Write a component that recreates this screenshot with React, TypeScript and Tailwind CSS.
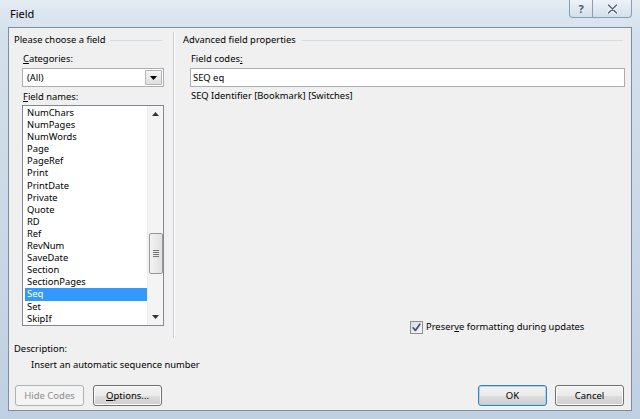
import React from "react";

const items = [
  "NumChars","NumPages","NumWords","Page","PageRef","Print","PrintDate","Private","Quote","RD","Ref","RevNum","SaveDate","Section","SectionPages","Seq","Set","SkipIf",
];

function Btn({ children, disabled, def, w }: { children: React.ReactNode; disabled?: boolean; def?: boolean; w: string }) {
  const base = "h-[21px] rounded-[3px] border flex items-center justify-center text-[9.5px] leading-none " + w;
  if (disabled)
    return <div className={base + " border-[#adb2b5] bg-[#f4f4f4] text-[#8d8d8d]"}>{children}</div>;
  return (
    <div
      className={
        base +
        (def
          ? " border-[#3c7fb1] shadow-[inset_0_0_0_1px_#a5d6f5]"
          : " border-[#707070] shadow-[inset_0_0_0_1px_#fcfcfc]") +
        " bg-[linear-gradient(#f2f2f2_0%,#ebebeb_50%,#dddddd_50%,#cfcfcf_100%)] text-black"
      }
    >
      {children}
    </div>
  );
}

export default function App() {
  return (
    <div
      className="w-[640px] h-[419px] overflow-hidden flex flex-col bg-[linear-gradient(180deg,#e3ebf3_0%,#d4e0ec_8%,#bfd0e2_100%)] px-[8px] pb-[8px]"
      style={{ fontFamily: '"Noto Sans", "Open Sans", sans-serif' }}
    >
      {/* title bar */}
      <div className="h-[27px] flex items-start shrink-0">
        <div className="pl-[2px] pt-[6px] text-[11px] leading-[16px] text-black">Field</div>
        <div className="ml-auto flex h-[18px] mr-[0px]">
          <div className="w-[24px] h-[18px] border border-[#8d9db0] border-t-0 rounded-bl-[4px] bg-[linear-gradient(#eef3f8,#d3dfea)] flex items-center justify-center text-[11px] font-bold text-[#4b5a6b] leading-none">
            ?
          </div>
          <div className="w-[39px] h-[18px] border border-[#8d9db0] border-t-0 border-l-0 rounded-br-[4px] bg-[linear-gradient(#eef3f8,#d3dfea)] flex items-center justify-center">
            <svg width="11" height="10" viewBox="0 0 11 10">
              <path d="M1.5 1 L9.5 9 M9.5 1 L1.5 9" stroke="#ffffff" strokeWidth="3.2" strokeLinecap="round" />
              <path d="M1.5 1 L9.5 9 M9.5 1 L1.5 9" stroke="#56657a" strokeWidth="1.6" strokeLinecap="round" />
            </svg>
          </div>
        </div>
      </div>

      {/* client */}
      <div className="flex-1 bg-[#f0f0f0] border border-[#7f8fa3] flex flex-col text-[9.4px] text-black leading-[16px]">
        {/* columns */}
        <div className="flex h-[306px] mt-[4px]">
          {/* left */}
          <div className="w-[164px] pl-[5px] pr-[10px] flex flex-col">
            <div className="flex items-center h-[16px]">
              <span>Please choose a field</span>
              <div className="flex-1 h-px bg-[#d5dfe5] ml-[4px] mt-[1px]" />
            </div>
            <div className="mt-[3px] ml-[9px] h-[16px]">
              <span className="underline">C</span>ategories:
            </div>
            <div className="mt-[1px] ml-[8px] w-[142px] h-[19px] border border-[#abadb3] bg-white flex items-stretch">
              <div className="flex-1 pl-[4px] flex items-center">(All)</div>
              <div className="w-[17px] border border-[#b5b5b5] m-px rounded-[1px] bg-[linear-gradient(#f4f4f4,#dedede)] flex items-center justify-center">
                <svg width="7" height="4" viewBox="0 0 7 4"><path d="M0 0H7L3.5 4Z" fill="#000" /></svg>
              </div>
            </div>
            <div className="mt-[2px] ml-[9px] h-[16px]">
              <span className="underline">F</span>ield names:
            </div>
            <div className="ml-[8px] w-[142px] h-[221px] border border-[#828790] bg-white flex overflow-hidden">
              <div className="flex-1 pt-[1px] pl-[2px] overflow-hidden">
                {items.map((it) => (
                  <div
                    key={it}
                    className={
                      "h-[12.1px] leading-[12.1px] pl-[2px] whitespace-nowrap " +
                      (it === "Seq" ? "bg-[#3399ff] text-white" : "")
                    }
                  >
                    {it}
                  </div>
                ))}
              </div>
              <div className="w-[16px] bg-[#f4f4f4] border-l border-[#ececec] flex flex-col items-center">
                <div className="h-[16px] flex items-center justify-center">
                  <svg width="7" height="4" viewBox="0 0 7 4"><path d="M0 4H7L3.5 0Z" fill="#333" /></svg>
                </div>
                <div className="mt-[111px] w-[14px] h-[41px] rounded-[2px] border border-[#979797] bg-[linear-gradient(90deg,#f3f3f3,#e0e0e0)] flex flex-col items-center justify-center gap-[1px]">
                  <div className="w-[6px] h-px bg-[#777]" />
                  <div className="w-[6px] h-px bg-[#777]" />
                  <div className="w-[6px] h-px bg-[#777]" />
                  <div className="w-[6px] h-px bg-[#777]" />
                </div>
                <div className="mt-auto h-[16px] flex items-center justify-center">
                  <svg width="7" height="4" viewBox="0 0 7 4"><path d="M0 0H7L3.5 4Z" fill="#333" /></svg>
                </div>
              </div>
            </div>
          </div>

          {/* right */}
          <div className="flex-1 border-l border-[#c9cdd2] shadow-[inset_1px_0_0_#ffffff] pl-[9px] pr-[6px] flex flex-col">
            <div className="flex items-center h-[16px]">
              <span>Advanced field properties</span>
              <div className="flex-1 h-px bg-[#d5dfe5] ml-[5px] mr-[2px] mt-[1px]" />
            </div>
            <div className="mt-[3px] ml-[8px] h-[16px]">
              Field codes<span className="underline">:</span>
            </div>
            <div className="mt-[1px] ml-[7px] h-[19px] border border-[#abadb3] bg-white flex items-center pl-[2px]">
              SEQ eq
            </div>
            <div className="ml-[8px] mt-[1px] h-[16px]">SEQ Identifier [Bookmark] [Switches]</div>
            <div className="mt-auto mb-[3px] ml-[227px] flex items-center h-[16px]">
              <div className="w-[13px] h-[13px] border border-[#8e8f8f] bg-[linear-gradient(135deg,#dcdcdc,#f8f8f8)] flex items-center justify-center">
                <svg width="9" height="9" viewBox="0 0 9 9">
                  <path d="M1.2 4.8 L3.4 7.4 L7.8 1.2" stroke="#3d4f86" strokeWidth="1.7" fill="none" strokeLinecap="round" strokeLinejoin="round" />
                </svg>
              </div>
              <span className="ml-[3px]">
                Preser<span className="underline">v</span>e formatting during updates
              </span>
            </div>
          </div>
        </div>

        <div className="mt-[3px] ml-[5px] h-[16px]">Description:</div>
        <div className="ml-[22px] h-[16px]">Insert an automatic sequence number</div>

        <div className="mt-[12px] flex pl-[6px] pr-[7px]">
          <Btn disabled w="w-[69px]">Hide Codes</Btn>
          <div className="ml-[9px]">
            <Btn w="w-[69px]">
              <span><span className="underline">O</span>ptions...</span>
            </Btn>
          </div>
          <div className="ml-auto">
            <Btn def w="w-[69px]">OK</Btn>
          </div>
          <div className="ml-[8px]">
            <Btn w="w-[69px]">Cancel</Btn>
          </div>
        </div>
      </div>
    </div>
  );
}
